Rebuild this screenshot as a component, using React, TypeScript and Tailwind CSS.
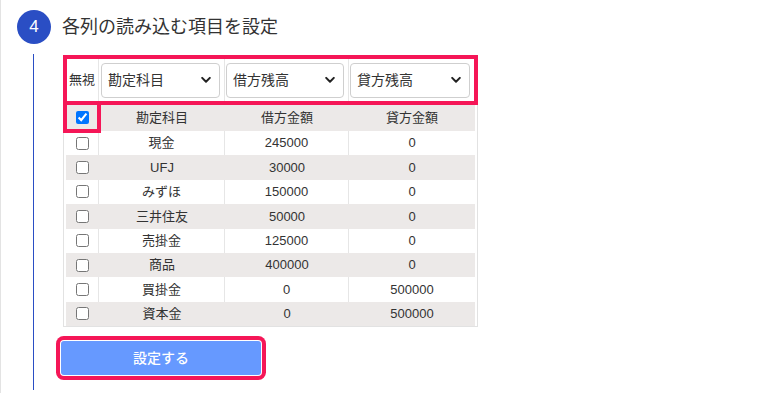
import React from 'react'

const rows = [
  { name: '現金', debit: '245000', credit: '0' },
  { name: 'UFJ', debit: '30000', credit: '0' },
  { name: 'みずほ', debit: '150000', credit: '0' },
  { name: '三井住友', debit: '50000', credit: '0' },
  { name: '売掛金', debit: '125000', credit: '0' },
  { name: '商品', debit: '400000', credit: '0' },
  { name: '買掛金', debit: '0', credit: '500000' },
  { name: '資本金', debit: '0', credit: '500000' },
]

const font = { fontFamily: '"Liberation Sans", "Noto Sans CJK JP", sans-serif' }

function Select({ value }: { value: string }) {
  return (
    <div className="relative h-[35px] w-full">
      <select
        defaultValue={value}
        className="h-full w-full appearance-none rounded-[4px] border border-[#cfcfcf] bg-white pl-[6px] pr-6 text-[14px] text-[#333]"
      >
        <option>勘定科目</option>
        <option>借方残高</option>
        <option>貸方残高</option>
      </select>
      {/* chevron */}
      <svg
        className="pointer-events-none absolute right-[9px] top-1/2 -translate-y-1/2"
        width="10"
        height="7"
        viewBox="0 0 10 7"
        fill="none"
      >
        <path d="M1.2 1.4 5 5.2 8.8 1.4" stroke="#222" strokeWidth="2" strokeLinecap="round" strokeLinejoin="round" />
      </svg>
    </div>
  )
}

export default function App() {
  return (
    <div style={font} className="min-h-[393px] w-[778px] border-l border-[#e3e3e3] bg-white text-[#333]">
      {/* 見出し */}
      <div className="flex items-center pl-[16px] pt-[10px]">
        <div className="flex h-[34px] w-[34px] items-center justify-center rounded-full bg-[#2a4ec4] text-[17px] text-white">
          4
        </div>
        <h2 className="ml-[11px] text-[18px] text-[#333]">各列の読み込む項目を設定</h2>
      </div>

      <div className="ml-[32px] mt-[10px] border-l border-[#2a4ec4] pb-[15px] pt-[1px]">
        {/* テーブル */}
        <div className="relative ml-[29px] w-[415px] border border-[#e2e2e2] px-[2px] text-[13px]">
          <div className="grid grid-cols-[33px_126px_124px_126px]">
            {/* 読み込み項目 */}
            <div className="flex h-[48px] items-center justify-center border-r border-[#e6e6e6] bg-white">無視</div>
            <div className="flex h-[48px] items-center border-r border-[#e6e6e6] bg-white pl-[2px] pr-[4px]">
              <Select value="勘定科目" />
            </div>
            <div className="flex h-[48px] items-center border-r border-[#e6e6e6] bg-white pl-[1px] pr-[4px]">
              <Select value="借方残高" />
            </div>
            <div className="flex h-[48px] items-center bg-white pl-[1px] pr-[5px]">
              <Select value="貸方残高" />
            </div>

            {/* ヘッダー */}
            <div className="flex h-[27px] items-center justify-center bg-[#ece9e8]">
              <input type="checkbox" defaultChecked className="m-0 h-[13px] w-[13px]" />
            </div>
            <div className="flex h-[27px] items-center justify-center bg-[#ece9e8]">勘定科目</div>
            <div className="flex h-[27px] items-center justify-center bg-[#ece9e8]">借方金額</div>
            <div className="flex h-[27px] items-center justify-center bg-[#ece9e8]">貸方金額</div>

            {rows.map((r, i) => {
              const even = i % 2 === 0
              const cell = even
                ? 'flex h-[24.375px] items-center justify-center bg-white border-r border-[#e6e6e6]'
                : 'flex h-[24.375px] items-center justify-center bg-[#ece9e8]'
              return (
                <React.Fragment key={r.name}>
                  <div className={cell}>
                    <input type="checkbox" className="m-0 h-[13px] w-[13px]" />
                  </div>
                  <div className={cell}>{r.name}</div>
                  <div className={cell}>{r.debit}</div>
                  <div className={even ? 'flex h-[24.375px] items-center justify-center bg-white' : cell}>{r.credit}</div>
                </React.Fragment>
              )
            })}
          </div>

          {/* ハイライト枠 */}
          <div className="pointer-events-none absolute left-[-1px] top-[-1px] h-[50px] w-[415px] border-4 border-[#f51657]" />
          <div className="pointer-events-none absolute left-[-1px] top-[45px] h-[32px] w-[38px] border-4 border-[#f51657]" />
        </div>

        {/* ボタン */}
        <button
          type="button"
          className="ml-[27px] mt-[14px] h-[34px] w-[200px] rounded-[3px] bg-[#6699ff] text-[14px] font-medium text-white shadow-[0_0_0_1px_#ffffff,0_0_0_5px_#f51657]"
        >
          設定する
        </button>
      </div>
    </div>
  )
}
